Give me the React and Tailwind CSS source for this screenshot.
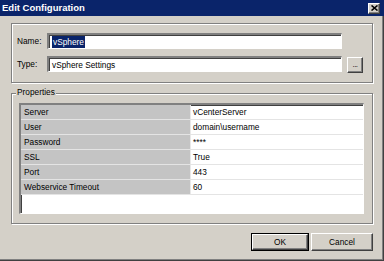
const rows = [
  ["Server", "vCenterServer"],
  ["User", "domain\\username"],
  ["Password", "****"],
  ["SSL", "True"],
  ["Port", "443"],
  ["Webservice Timeout", "60"],
];

// classic sunken field
const sunken =
  "border-t-2 border-l-2 border-t-[#808080] border-l-[#808080] border-b border-r border-b-white border-r-white shadow-[inset_1px_1px_0_#404040]";

const raised =
  "border-t border-l border-t-white border-l-white border-b border-r border-b-[#404040] border-r-[#404040] shadow-[inset_-1px_-1px_0_#808080]";

const Field = ({ children }) => (
  <div className={`h-[16px] w-[295px] bg-white flex items-center pl-[3px] ${sunken}`}>{children}</div>
);

export default function App() {
  return (
    <div
      className="w-[384px] h-[261px] bg-[#d4d0c8] flex flex-col text-black text-[8.3px] leading-[10px] shadow-[inset_-1px_-1px_0_#404040,inset_-2px_-2px_0_#808080]"
      style={{ fontFamily: '"Liberation Sans", Arial, sans-serif' }}
    >
      {/* Title bar */}
      <div className="h-[16px] bg-[#0a246a] flex items-center justify-between pl-[2px] pr-[4px]">
        <span className="text-white font-bold text-[9.5px]">Edit Configuration</span>
        <div className={`w-[12px] h-[11px] bg-[#d4d0c8] flex items-center justify-center ${raised}`}>
          <svg width="7" height="6" viewBox="0 0 7 6">
            <path d="M0.5 0.5 L6.5 5.5 M6.5 0.5 L0.5 5.5" stroke="#000" strokeWidth="1.6" />
          </svg>
        </div>
      </div>

      {/* Name / Type group */}
      <div className="mt-[7px] ml-[11px] w-[362px] h-[60px] border border-[#808080] shadow-[inset_1px_1px_0_#fff,1px_1px_0_#fff] flex flex-col gap-[6px] pt-[9px] pl-[5px]">
        <div className="flex items-center">
          <span className="w-[30px]">Name:</span>
          <Field>
            <span className="bg-[#0a246a] text-white px-[1px] leading-[12px]">vSphere</span>
          </Field>
        </div>
        <div className="flex items-center">
          <span className="w-[30px]">Type:</span>
          <Field>vSphere Settings</Field>
          <div className={`ml-[5px] mt-[2px] w-[16px] h-[16px] flex items-center justify-center ${raised}`}>
            <span className="text-[8px] leading-[6px] tracking-[-0.5px]">...</span>
          </div>
        </div>
      </div>

      {/* Properties group */}
      <div className="relative mt-[10px] ml-[11px] w-[362px] h-[131px] border border-[#808080] shadow-[inset_1px_1px_0_#fff,1px_1px_0_#fff] pt-[9px] pl-[7px]">
        <span className="absolute -top-[7px] left-[4px] bg-[#d4d0c8] px-[1px]">Properties</span>
        <div className={`w-[345px] h-[111px] bg-white flex flex-col ${sunken}`}>
          {rows.map(([k, v]) => (
            <div key={k} className="flex h-[15px] border-b border-b-[#e4e4e4]">
              <div className="w-[170px] bg-[#c4c4c4] border-r border-r-[#e8e8e8] flex items-center pl-[3px]">{k}</div>
              <div className="flex-1 flex items-center pl-[2px]">{v}</div>
            </div>
          ))}
        </div>
      </div>

      {/* Buttons */}
      <div className="flex justify-end gap-[2px] pr-[11px] mt-[9px]">
        <div className="w-[58px] h-[18px] border border-black">
          <div className={`w-full h-full flex items-center justify-center ${raised}`}>OK</div>
        </div>
        <div className={`w-[62px] h-[18px] flex items-center justify-center ${raised}`}>Cancel</div>
      </div>
    </div>
  );
}
